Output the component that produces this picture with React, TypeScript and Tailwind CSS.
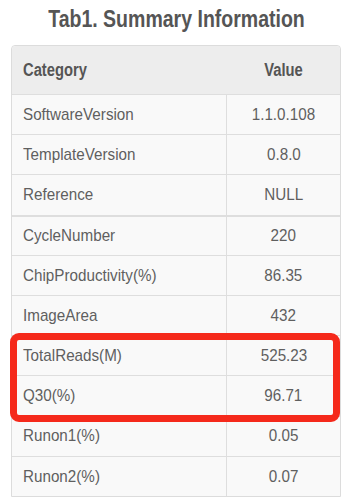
const rows: [string, string][] = [
  ["SoftwareVersion", "1.1.0.108"],
  ["TemplateVersion", "0.8.0"],
  ["Reference", "NULL"],
  ["CycleNumber", "220"],
  ["ChipProductivity(%)", "86.35"],
  ["ImageArea", "432"],
  ["TotalReads(M)", "525.23"],
  ["Q30(%)", "96.71"],
  ["Runon1(%)", "0.05"],
  ["Runon2(%)", "0.07"],
];

// the source renders in a narrow face, squeeze Arial to match
function Narrow({ children, left, wide }: { children: string; left?: boolean; wide?: boolean }) {
  return (
    <span
      className={`inline-block whitespace-nowrap ${wide ? "scale-x-[0.895]" : "scale-x-[0.82]"} ${
        left ? "origin-left" : "origin-center"
      }`}
    >
      {children}
    </span>
  );
}

export default function App() {
  return (
    <div className="relative h-[497px] w-[354px] overflow-hidden bg-white [font-family:'Liberation_Sans',Arial,sans-serif]">
      <h1 className="flex h-[45px] items-center justify-center pb-[7px] pr-[2px] text-[23.8px] font-bold text-[#555]">
        <Narrow>Tab1. Summary Information</Narrow>
      </h1>
      <div className="ml-[11px] w-[330px] rounded-t-[4px] border border-[#dcdcdc] bg-[#f9f9f9]">
        <div className="flex h-[48px] items-center rounded-t-[4px] bg-[#ededed] text-[18px] font-bold text-[#555]">
          <div className="w-[215px] pl-[11px]">
            <Narrow left>Category</Narrow>
          </div>
          <div className="flex-1 text-center">
            <Narrow>Value</Narrow>
          </div>
        </div>
        {rows.map(([name, value], i) => (
          <div
            key={name}
            className={`flex h-[40.2px] text-[17px] text-[#5f5f5f] ${
              i === 3 ? "border-t-2" : "border-t"
            } border-[#dedede]`}
          >
            <div className="flex w-[215px] items-center border-r border-[#dedede] pl-[11px]">
              <Narrow left wide>{name}</Narrow>
            </div>
            <div className="flex flex-1 items-center justify-center">
              <Narrow wide>{value}</Narrow>
            </div>
          </div>
        ))}
      </div>
      <div className="absolute left-[10px] top-[333px] h-[89px] w-[330px] rounded-[9px] border-[7px] border-[#f5291b]" />
    </div>
  );
}
